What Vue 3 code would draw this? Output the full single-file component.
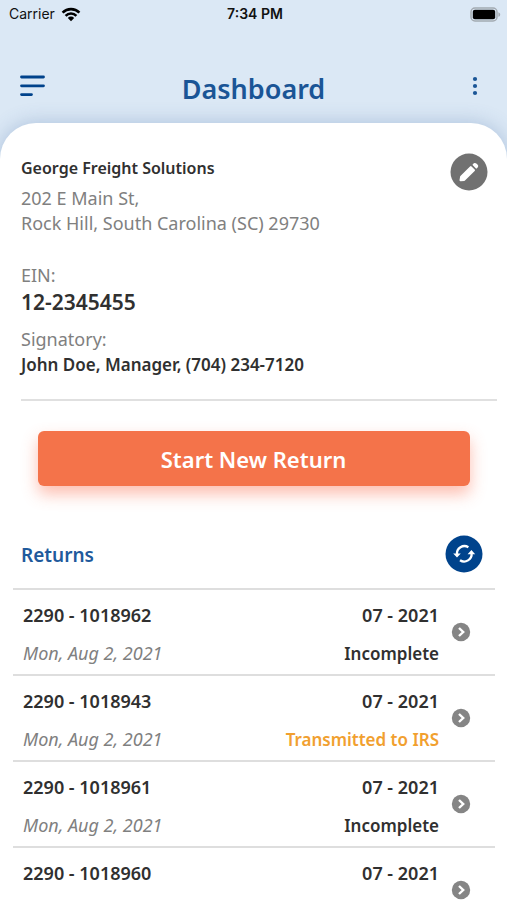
<script setup>
const company = {
  name: 'George Freight Solutions',
  street: '202 E Main St,',
  city: 'Rock Hill, South Carolina (SC) 29730',
  ein: '12-2345455',
  signatory: 'John Doe, Manager, (704) 234-7120',
}

const returns = [
  { id: '2290 - 1018962', period: '07 - 2021', date: 'Mon, Aug 2, 2021', status: 'Incomplete' },
  { id: '2290 - 1018943', period: '07 - 2021', date: 'Mon, Aug 2, 2021', status: 'Transmitted to IRS', sent: true },
  { id: '2290 - 1018961', period: '07 - 2021', date: 'Mon, Aug 2, 2021', status: 'Incomplete' },
  { id: '2290 - 1018960', period: '07 - 2021' },
]
</script>

<template>
  <div class="screen">
    <div class="status">
      <span class="carrier">
        Carrier
        <svg width="20" height="15" viewBox="0 0 20 15" aria-hidden="true">
          <g fill="none" stroke="#000" stroke-width="2.6">
            <path d="M1.6 5.6a11.9 11.9 0 0 1 16.8 0" />
            <path d="M4.6 8.8a7.6 7.6 0 0 1 10.8 0" />
          </g>
          <path d="M10 14.2 6.8 10.9a4.5 4.5 0 0 1 6.4 0z" />
        </svg>
      </span>
      <span class="clock">7:34 PM</span>
      <svg class="battery" width="31" height="15" viewBox="0 0 31 15" aria-hidden="true">
        <rect x="1" y="1" width="26" height="13" rx="4" fill="#dbe8f5" stroke="#a3aab1" stroke-width="1.5" />
        <rect x="2.8" y="2.8" width="22.4" height="9.4" rx="2" />
        <path d="M28.4 5.2c2.4.8 2.4 3.8 0 4.6z" fill="#a3aab1" />
      </svg>
    </div>

    <header class="bar">
      <button class="icon menu" aria-label="Menu">
        <svg width="25" height="22" viewBox="0 0 25 22">
          <g stroke="#00428b" stroke-width="2.8" stroke-linecap="round">
            <path d="M1.5 2h22M1.5 10.8h22M1.5 19.6h10" />
          </g>
        </svg>
      </button>
      <h1>Dashboard</h1>
      <button class="icon more" aria-label="More options">
        <svg width="24" height="20" viewBox="0 0 24 20" fill="#1a5596">
          <circle cx="12" cy="3" r="2.1" />
          <circle cx="12" cy="10" r="2.1" />
          <circle cx="12" cy="17" r="2.1" />
        </svg>
      </button>
    </header>

    <main class="sheet">
      <section class="company">
        <div class="details">
          <h2>{{ company.name }}</h2>
          <p class="muted address">{{ company.street }}<br />{{ company.city }}</p>
          <p class="muted">EIN:</p>
          <p class="ein">{{ company.ein }}</p>
          <p class="muted">Signatory:</p>
          <p class="strong">{{ company.signatory }}</p>
        </div>
        <button class="icon edit" aria-label="Edit company">
          <svg width="38" height="38" viewBox="0 0 38 38">
            <circle cx="19" cy="19" r="18.5" fill="#717171" />
            <g fill="#fff" stroke="#fff" stroke-linejoin="round">
              <path stroke-width="2.2" d="M10.6 27.2 11.2 23.8 20.8 14.2 23.9 17.3 14.2 26.8z" />
              <path stroke-width="1.6" d="m23.4 11.8.8-.8q.8-.6 1.6.1l1.3 1.3q.7.8 0 1.6l-.8.8z" />
            </g>
          </svg>
        </button>
      </section>

      <button class="start">Start New Return</button>

      <section class="returns">
        <div class="heading">
          <h2>Returns</h2>
          <button class="icon" aria-label="Refresh returns">
            <svg width="38" height="38" viewBox="0 0 38 38">
              <circle cx="19" cy="19" r="18.5" fill="#00438c" />
              <g fill="none" stroke="#fff" stroke-width="2.3">
                <path d="M12 19.4A7.5 7.5 0 0 1 23.4 12.2" />
                <path d="M26.6 18.2A7.5 7.5 0 0 1 15 25.2" />
              </g>
              <path fill="#fff" d="M8.2 18.4h7.6L12 22.6zM22.6 19.2h7.6L26.4 15z" />
            </svg>
          </button>
        </div>
        <ul>
          <li v-for="item in returns" :key="item.id">
            <a href="#" class="row">
              <span class="cells">
                <span>{{ item.id }}</span>
                <span class="end">{{ item.period }}</span>
                <span v-if="item.date" class="date">{{ item.date }}</span>
                <span v-if="item.status" class="end state" :class="{ sent: item.sent }">{{ item.status }}</span>
              </span>
              <svg width="20" height="20" viewBox="0 0 20 20" aria-hidden="true">
                <circle cx="10" cy="10" r="9.2" fill="#858585" />
                <path d="m8 6 4.2 4L8 14" fill="none" stroke="#fff" stroke-width="2.4" />
              </svg>
            </a>
          </li>
        </ul>
      </section>
    </main>
  </div>
</template>

<style>
body {
  margin: 0;
}
</style>

<style scoped>
.screen {
  height: 100vh;
  overflow: hidden;
  display: flex;
  flex-direction: column;
  background: #dbe8f5;
  color: #303030;
  font-family: "Noto Sans", "Open Sans", sans-serif;
  font-size: 18px;
  line-height: 25px;
}

h1,
h2,
p,
ul {
  margin: 0;
  padding: 0;
}

button {
  border: 0;
  font: inherit;
  cursor: pointer;
}

svg {
  display: block;
  flex: none;
}

.icon {
  padding: 0;
  background: none;
}

.status {
  display: grid;
  grid-template-columns: 1fr auto 1fr;
  align-items: center;
  padding: 2px 6px 0 9px;
  color: #111;
  font-family: Inter, sans-serif;
  font-size: 14px;
  line-height: 24px;
}

.carrier {
  display: flex;
  align-items: center;
  gap: 6px;
}

.clock {
  font-weight: 600;
}

.battery {
  justify-self: end;
}

.bar {
  display: grid;
  grid-template-columns: 1fr auto 1fr;
  align-items: center;
  padding: 44px 20px 16px;
}

.bar .icon {
  padding-bottom: 5px;
}

.menu {
  justify-self: start;
}

.more {
  justify-self: end;
}

h1 {
  color: #1a5596;
  font-size: 27px;
  font-weight: 600;
  line-height: 37px;
}

.sheet {
  flex: 1;
  min-height: 0;
  overflow: hidden;
  padding-top: 33px;
  border-radius: 36px 36px 0 0;
  background: #fff;
  box-shadow: 0 0 20px rgba(60, 100, 160, 0.3);
}

.company {
  display: flex;
  justify-content: space-between;
  align-items: flex-start;
  margin: 0 10px 0 21px;
  padding-bottom: 22px;
  border-bottom: 2px solid #e0e0e0;
}

.company h2 {
  margin-bottom: 5px;
  font-size: 16px;
  font-weight: 600;
}

.strong {
  font-size: 17px;
  font-weight: 600;
}

.muted {
  color: #808080;
}

.address {
  margin-bottom: 27px;
}

.ein {
  margin: 2px 0 12px;
  font-size: 21px;
  font-weight: 600;
}

.edit {
  margin: -3px 9px 0 0;
}

.start {
  display: block;
  width: calc(100% - 75px);
  margin: 30px auto 49px;
  padding: 13px 12px 11px;
  border-radius: 6px;
  background: #f4734a;
  box-shadow: 0 8px 16px rgba(250, 110, 80, 0.45);
  color: #fff;
  font-size: 22px;
  font-weight: 600;
  line-height: 31px;
}

.returns {
  padding: 0 12px 0 13px;
}

.heading {
  display: flex;
  justify-content: space-between;
  align-items: center;
  padding: 0 12px 15px 8px;
}

.heading h2 {
  padding-top: 2px;
  color: #1f5a9c;
  font-size: 19px;
  font-weight: 600;
}

ul {
  list-style: none;
}

.row {
  display: flex;
  align-items: center;
  gap: 12px;
  height: 84px;
  padding: 0 24px 0 10px;
  border-top: 2px solid #dedede;
  color: inherit;
  font-weight: 600;
  text-decoration: none;
}

.cells {
  flex: 1;
  display: grid;
  grid-template-columns: auto auto;
  grid-template-rows: 25px 25px;
  row-gap: 13px;
  padding-top: 4px;
}

.end {
  text-align: right;
}

.date {
  color: #808080;
  font-style: italic;
  font-weight: 400;
}

.state {
  font-size: 17px;
}

.sent {
  color: #f1a02f;
}
</style>
